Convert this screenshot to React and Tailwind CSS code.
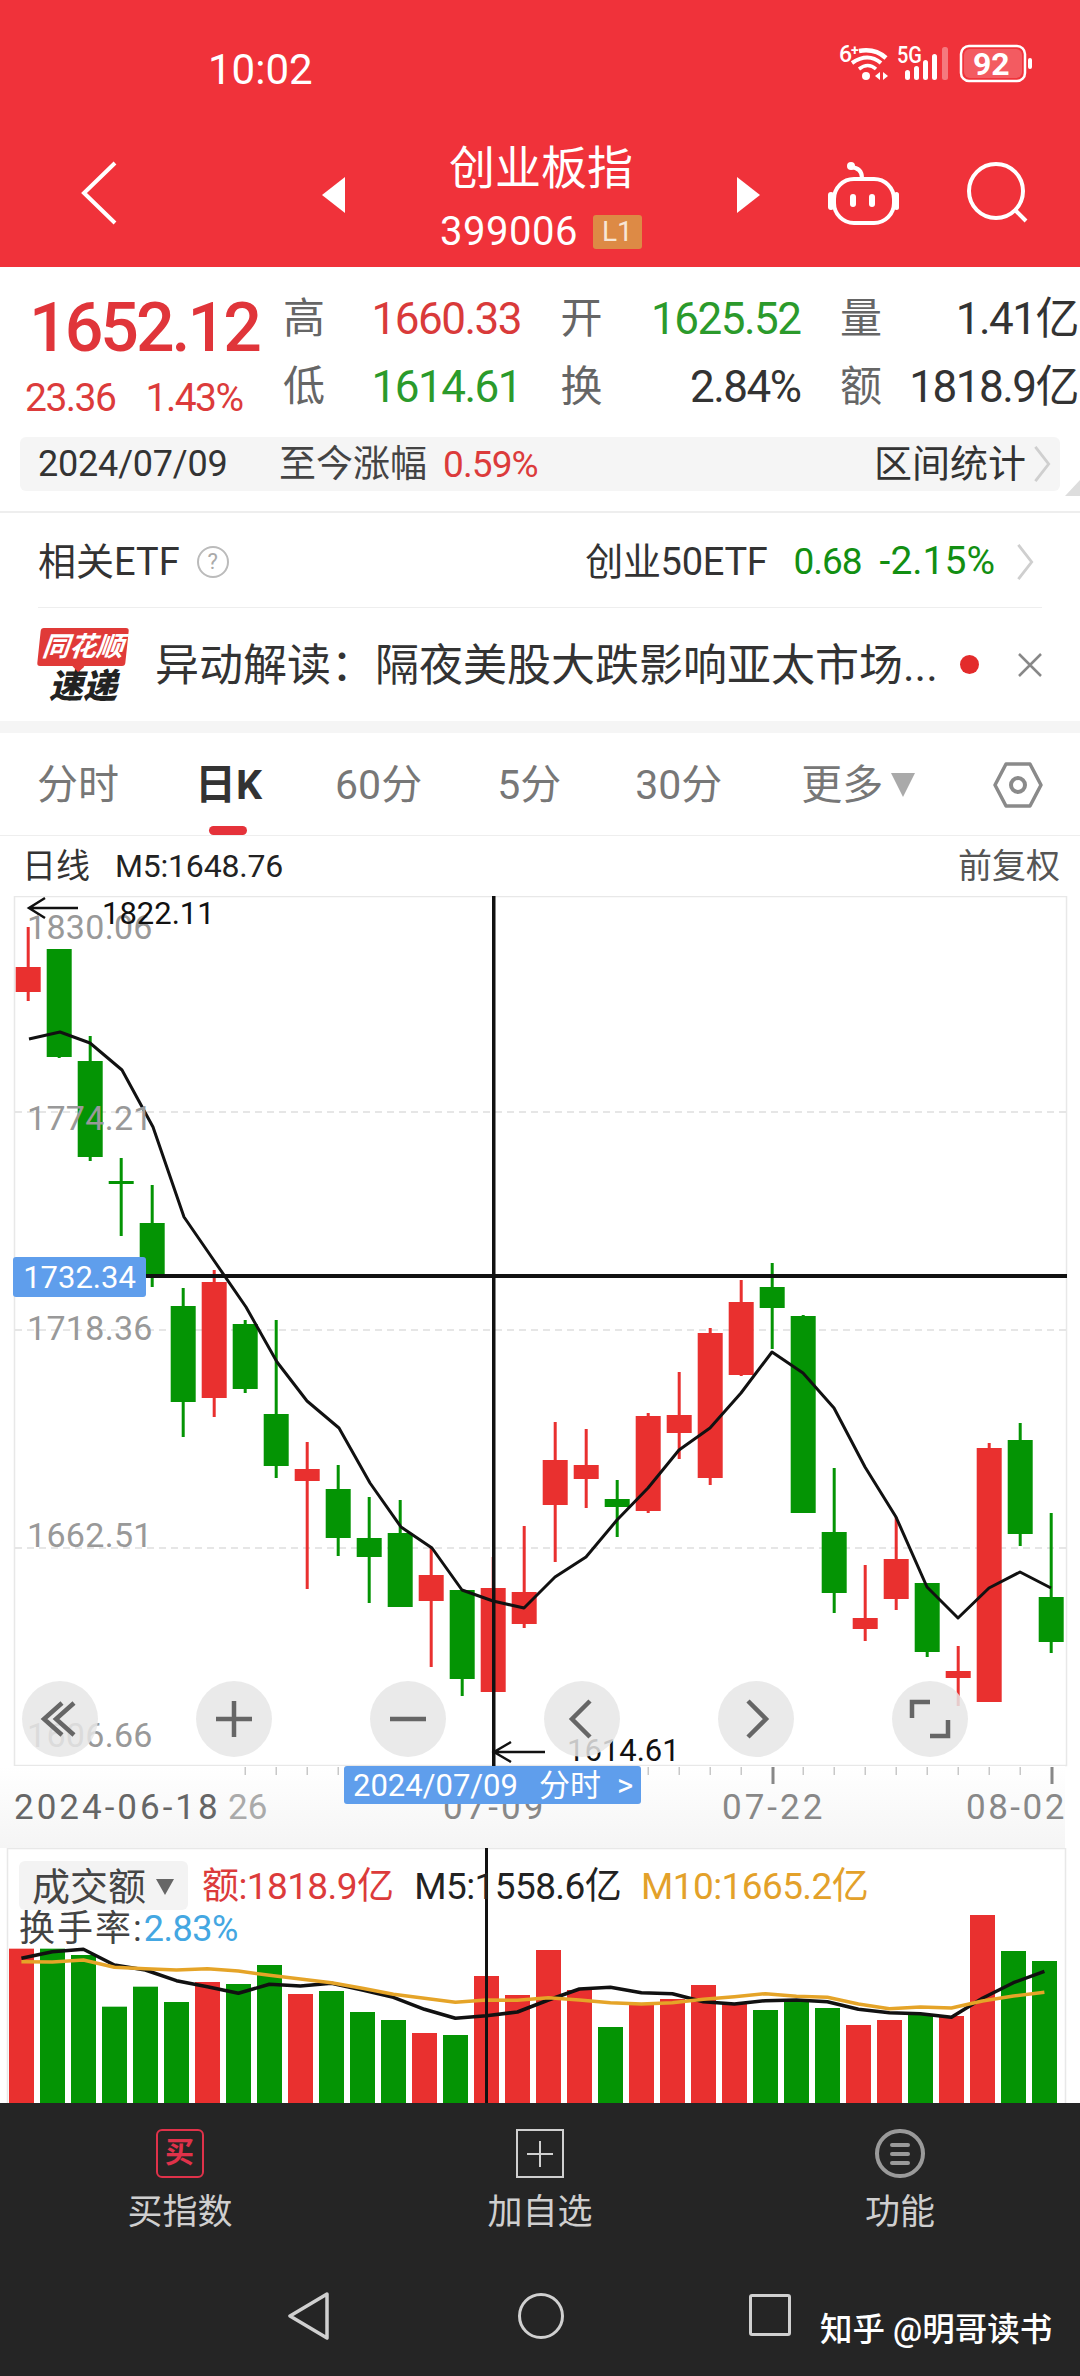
import React from "react";

const R = "#e9302f";
const G = "#049404";
const candles = [
  ["r", 927, 1001, 967, 992], ["g", 949, 1058, 949, 1057], ["g", 1036, 1161, 1061, 1157], ["g", 1158, 1236, 1181, 1184],
  ["g", 1185, 1287, 1223, 1278], ["g", 1288, 1437, 1306, 1402], ["r", 1270, 1417, 1282, 1398], ["g", 1320, 1393, 1324, 1389],
  ["g", 1320, 1478, 1414, 1466], ["r", 1442, 1589, 1469, 1481], ["g", 1465, 1556, 1489, 1538], ["g", 1497, 1603, 1538, 1557],
  ["g", 1500, 1607, 1533, 1607], ["r", 1548, 1667, 1575, 1601], ["g", 1590, 1696, 1590, 1679], ["r", 1557, 1692, 1588, 1692],
  ["r", 1526, 1628, 1592, 1624], ["r", 1422, 1562, 1460, 1505], ["r", 1429, 1508, 1465, 1479], ["g", 1480, 1537, 1499, 1507],
  ["r", 1413, 1513, 1416, 1511], ["r", 1372, 1459, 1415, 1433], ["r", 1328, 1485, 1333, 1478], ["r", 1280, 1376, 1302, 1375],
  ["g", 1263, 1349, 1287, 1308], ["g", 1315, 1513, 1316, 1513], ["g", 1468, 1613, 1532, 1593], ["r", 1565, 1641, 1618, 1629],
  ["r", 1517, 1610, 1559, 1599], ["g", 1583, 1657, 1583, 1652], ["r", 1646, 1706, 1671, 1678], ["r", 1443, 1702, 1448, 1702],
  ["g", 1423, 1546, 1440, 1534], ["g", 1513, 1653, 1597, 1642],
];
const ma5 = "29,1039 60,1032 90,1043 122,1070 153,1127 184,1217 215,1262 246,1307 277,1362 307,1401 339,1428 370,1483 401,1527 432,1548 462,1590 493,1601 524,1608 555,1577 586,1557 617,1520 648,1488 679,1450 710,1428 741,1393 772,1352 803,1373 834,1408 865,1467 896,1517 927,1587 958,1618 989,1588 1020,1572 1051,1588";
const vols = [
  ["r", 356], ["g", 356], ["g", 375], ["g", 530], ["g", 470], ["g", 516], ["r", 456], ["g", 462], ["g", 405], ["r", 492], ["g", 483], ["g", 546],
  ["g", 570], ["r", 609], ["g", 615], ["r", 438], ["r", 495], ["r", 360], ["r", 480], ["g", 591], ["r", 525], ["r", 507], ["r", 465], ["r", 522],
  ["g", 540], ["g", 516], ["g", 534], ["r", 585], ["r", 570], ["g", 555], ["r", 558], ["r", 255], ["g", 363], ["g", 393],
];
const vBlack = [385,365,358,405,420,452,470,490,463,468,460,480,502,538,565,557,546,510,477,472,488,491,515,522,512,510,515,538,548,551,562,505,458,424];
const vOrange = [395,396,390,412,416,420,416,423,436,447,458,475,493,505,517,510,511,503,510,518,522,518,508,500,491,499,502,522,536,531,534,513,498,487];
const toPts = (a) => a.map((v, i) => `${(21.4 + 31 * i).toFixed(1)},${(v / 3).toFixed(1)}`).join(" ");

function StatCell({ label, value, cls }) {
  return (
    <div className="flex h-[68px] items-center justify-between">
      <span className="text-[42px] leading-none text-[#666666]">{label}</span>
      <span className={`text-[44px] leading-none tracking-[-1.5px] ${cls}`}>{value}</span>
    </div>
  );
}

function Chevron({ className }) {
  return (
    <svg className={className} viewBox="0 0 20 40" fill="none" stroke="#cfcfcf" strokeWidth="3">
      <path d="M3 2 L17 20 L3 38" />
    </svg>
  );
}

function RoundBtn({ d }) {
  return (
    <div className="flex h-[76px] w-[76px] items-center justify-center rounded-full bg-[#e6e6e6]/85">
      <svg width="44" height="44" viewBox="0 0 44 44" fill="none" stroke="#666666" strokeWidth="4.5">
        <path d={d} />
      </svg>
    </div>
  );
}

export default function App() {
  return (
    <div className="relative h-[2376px] w-[1080px] overflow-hidden bg-white font-[Roboto,'Noto_Sans_CJK_SC',sans-serif] text-[#333333]">
      {/* header */}
      <header className="relative h-[267px] bg-[#f0323a] text-white">
        <div className="flex h-[140px] items-start justify-between pl-[208px] pr-[47px] pt-[39px]">
          <span className="mt-[6px] text-[42px] leading-[50px]">10:02</span>
          <svg width="195" height="50" viewBox="838 44 195 50" fill="none" stroke="#fff">
            <text x="839" y="67" fontSize="23" fontWeight="500" fill="#fff" stroke="none" fontFamily="Roboto">6</text>
            <text x="851" y="60" fontSize="14" fontWeight="700" fill="#fff" stroke="none" fontFamily="Roboto">+</text>
            <path d="M859 56 Q875 53 886 63" strokeWidth="4.5" />
            <path d="M852 68 Q868 57 881 68" strokeWidth="4" />
            <path d="M859 74 Q868 67 876 74" strokeWidth="3.5" />
            <circle cx="866" cy="81" r="4" fill="#fff" stroke="none" />
            <path d="M880 77 l-5 4 l5 4 Z M883 77 l5 4 l-5 4 Z" fill="#fff" stroke="none" />
            <text x="897" y="68" fontSize="23" fontWeight="500" fill="#fff" stroke="none" fontFamily="Roboto" textLength="25" lengthAdjust="spacingAndGlyphs">5G</text>
            <rect x="905" y="75" width="5" height="10" rx="2.5" fill="#fff" stroke="none" />
            <rect x="914" y="71" width="5" height="14" rx="2.5" fill="#fff" stroke="none" />
            <rect x="923" y="65" width="5" height="20" rx="2.5" fill="#fff" stroke="none" />
            <rect x="932" y="59" width="5" height="26" rx="2.5" fill="#fff" stroke="none" />
            <rect x="942" y="52" width="6" height="33" rx="2.5" fill="#fff" fillOpacity="0.35" stroke="none" />
            <rect x="961" y="51" width="64" height="35" rx="8" strokeWidth="2.5" />
            <rect x="964" y="54" width="58" height="29" rx="6" fill="#fff" fillOpacity="0.2" stroke="none" />
            <text x="973" y="80" fontSize="32" fontWeight="700" fill="#fff" stroke="none" fontFamily="Roboto">92</text>
            <rect x="1028" y="63" width="4" height="11" rx="2" fill="#fff" stroke="none" />
          </svg>
        </div>
        <div className="flex h-[127px] items-start">
          <svg className="ml-[80px] mt-[21px]" width="38" height="64" viewBox="0 0 38 64" fill="none" stroke="#fff" strokeWidth="4">
            <path d="M35 2 L4 32 L35 62" />
          </svg>
          <svg className="ml-[204px] mt-[37px]" width="24" height="36" viewBox="0 0 24 36" fill="#fff">
            <path d="M23 0 L0 18 L23 36 Z" />
          </svg>
          <div className="flex w-[390px] flex-col items-center">
            <span className="h-[75px] pt-[2px] text-[46px] leading-[52px]">创业板指</span>
            <div className="flex items-center gap-[15px]">
              <span className="text-[40px] leading-[34px] tracking-[0.5px]">399006</span>
              <span className="flex h-[34px] w-[49px] items-center justify-center rounded-[3px] bg-[#dd8a45] text-[28px] leading-none text-[#f8e6d5]">L1</span>
            </div>
          </div>
          <svg className="mt-[37px]" width="24" height="36" viewBox="0 0 24 36" fill="#fff">
            <path d="M1 0 L24 18 L1 36 Z" />
          </svg>
          <svg className="ml-[67px] mt-[21px]" width="72" height="66" viewBox="825 161 72 66" fill="none" stroke="#fff" strokeWidth="4">
            <rect x="832" y="179" width="60" height="44" rx="20" />
            <path d="M860 178 Q860 168 849 167" />
            <circle cx="849" cy="166" r="4" fill="#fff" stroke="none" />
            <rect x="826" y="192" width="6" height="18" rx="3" fill="#fff" stroke="none" />
            <rect x="892" y="192" width="5" height="18" rx="2.5" fill="#fff" stroke="none" />
            <rect x="848" y="194" width="6" height="13" rx="3" fill="#fff" stroke="none" />
            <rect x="867" y="194" width="6" height="13" rx="3" fill="#fff" stroke="none" />
          </svg>
          <svg className="ml-[68px] mt-[22px]" width="62" height="62" viewBox="965 164 62 62" fill="none" stroke="#fff" strokeWidth="4">
            <circle cx="994" cy="193" r="27" />
            <path d="M1014 213 L1024 223" />
          </svg>
        </div>
      </header>

      {/* quote stats */}
      <section className="flex h-[170px]">
        <div className="flex w-[283px] flex-col pt-[29px]">
          <span className="pl-[29px] text-[68px] font-medium leading-[64px] tracking-[-3px] text-[#e0353a]">1652.12</span>
          <div className="mt-[23px] flex gap-[30px] pl-[25px] text-[39px] leading-[30px] tracking-[-1.5px] text-[#dc3b3b]">
            <span>23.36</span>
            <span>1.43%</span>
          </div>
        </div>
        <div className="grid h-fit grid-cols-[238px_240px_238px] gap-x-[39.5px] pt-[18px]">
          <StatCell label="高" value="1660.33" cls="text-[#d93a3a]" />
          <StatCell label="开" value="1625.52" cls="text-[#2b9a2b]" />
          <StatCell label="量" value="1.41亿" cls="text-[#333333]" />
          <StatCell label="低" value="1614.61" cls="text-[#2b9a2b]" />
          <StatCell label="换" value="2.84%" cls="text-[#333333]" />
          <StatCell label="额" value="1818.9亿" cls="text-[#333333]" />
        </div>
      </section>

      {/* range bar */}
      <div className="h-[76px] border-b-2 border-[#eeeeee]">
        <div className="relative mx-[20px] flex h-[54px] w-[1040px] items-center rounded-[6px] bg-[#f5f5f5] pl-[18px] pr-[8px] text-[37px] leading-none">
          <span className="w-[241px] text-[36px] tracking-[-0.2px]">2024/07/09</span>
          <span className="text-[#444444]">至今涨幅</span>
          <span className="ml-[16px] text-[37px] tracking-[-0.9px] text-[#dc3b3b]">0.59%</span>
          <span className="ml-auto text-[38px] text-[#333333]">区间统计</span>
          <Chevron className="ml-[6px] h-[38px] w-[20px]" />
        </div>
        <div className="absolute left-[1065px] top-[480px] h-0 w-0 border-b-[16px] border-l-[15px] border-b-[#dddddd] border-l-transparent" />
      </div>

      {/* ETF */}
      <section className="mx-[38px] flex h-[95px] items-center border-b border-[#eeeeee] pt-[3px]">
        <span className="text-[38px] leading-none">相关ETF</span>
        <span className="ml-[17px] flex h-[32px] w-[32px] items-center justify-center rounded-full border-2 border-[#bbbbbb] text-[22px] leading-none text-[#aaaaaa]">?</span>
        <span className="ml-auto text-[38px] leading-none tracking-[-0.3px]">创业50ETF</span>
        <span className="ml-[26px] text-[37px] leading-none tracking-[-1px] text-[#128f12]">0.68</span>
        <span className="ml-[18px] text-[39px] leading-none text-[#128f12]">-2.15%</span>
        <Chevron className="ml-[20px] mr-[7px] h-[38px] w-[20px]" />
      </section>

      {/* news */}
      <section className="flex h-[113px] items-center pl-[39px]">
        <div className="flex h-[74px] w-[88px] flex-col items-center">
          <div className="relative flex h-[38px] w-[88px] -skew-x-6 items-center justify-center rounded-[3px] bg-[#e03a38] text-[27px] font-bold italic leading-none text-white">
            同花顺
            <div className="absolute left-[36px] top-[34px] h-[8px] w-[10px] rotate-45 bg-[#e03a38]" />
          </div>
          <div className="mt-[4px] text-[34px] font-black italic leading-[32px] text-[#222222]">速递</div>
        </div>
        <span className="ml-[28px] w-[785px] whitespace-nowrap pt-[3px] text-[44px] leading-none text-[#333333]">异动解读：隔夜美股大跌影响亚太市场...</span>
        <span className="ml-[20px] h-[19px] w-[19px] rounded-full bg-[#e32b2b]" />
        <svg className="ml-[39px]" width="24" height="24" viewBox="0 0 24 24" stroke="#888888" strokeWidth="2.5">
          <path d="M1 1 L23 23 M23 1 L1 23" />
        </svg>
      </section>
      <div className="h-[12px] bg-[#f5f5f5]" />

      {/* tabs */}
      <nav className="relative flex h-[103px] items-center border-b border-[#eeeeee] pt-[2px] text-[41px] leading-none text-[#777777]">
        <span className="ml-[37px]">分时</span>
        <span className="ml-[76px] font-bold text-[#333333]">日K</span>
        <span className="ml-[73px]">60分</span>
        <span className="ml-[75px]">5分</span>
        <span className="ml-[74px]">30分</span>
        <span className="ml-[79px]">更多</span>
        <svg className="ml-[8px]" width="24" height="24" viewBox="0 0 24 24" fill="#aaaaaa"><path d="M0 0 H24 L12 24 Z" /></svg>
        <svg className="ml-[78px]" width="50" height="46" viewBox="0 0 50 46" fill="none" stroke="#8a8a8a">
          <path d="M13 2 H37 L48 23 L37 44 H13 L2 23 Z" strokeWidth="3.5" strokeLinejoin="round" />
          <circle cx="25" cy="23" r="7" strokeWidth="4" />
        </svg>
        <div className="absolute left-[209px] top-[93px] h-[9px] w-[38px] rounded-full bg-[#e5323a]" />
      </nav>

      {/* sub row */}
      <div className="flex h-[60px] items-center pl-[22px] pr-[20px] text-[34px] leading-none">
        <span>日线</span>
        <span className="ml-[25px] text-[32px] tracking-[-0.2px] text-[#222222]">M5:1648.76</span>
        <span className="ml-auto text-[#555555]">前复权</span>
      </div>

      {/* chart */}
      <section className="relative h-[952px]">
        <svg className="absolute left-0 top-0" width="1080" height="952" viewBox="0 896 1080 952">
          <defs>
            <linearGradient id="band" x1="0" x2="0" y1="0" y2="1">
              <stop offset="0" stopColor="#ffffff" />
              <stop offset="1" stopColor="#f5f5f5" />
            </linearGradient>
          </defs>
          <rect x="14.5" y="896.5" width="1052" height="869" fill="#fff" stroke="#e8e8e8" strokeWidth="1.5" />
          <rect x="0" y="1766" width="1065" height="82" fill="url(#band)" />
          {[1112, 1330, 1548].map((y) => (
            <line key={y} x1="15" x2="1066" y1={y} y2={y} stroke="#dedede" strokeWidth="1.5" strokeDasharray="7 5" />
          ))}
          {candles.map((c, i) => {
            const x = 28.2 + 31 * i;
            const col = c[0] === "r" ? R : G;
            return (
              <g key={i} fill={col}>
                <rect x={x - 1.5} y={c[1]} width="3" height={c[2] - c[1]} />
                <rect x={x - 12.5} y={c[3]} width="25" height={c[4] - c[3]} />
              </g>
            );
          })}
          {candles.map((c, i) => {
            const x = 245.5 + 31 * i;
            if (x > 1060 || (x >= 345 && x <= 641)) return null;
            const major = x === 772.5 || x === 1051.5;
            return <rect key={i} x={x - 1} y="1767" width={major ? 3 : 1.5} height={major ? 17 : 8} fill={major ? "#888888" : "#c8c8c8"} />;
          })}
          <polyline points={ma5} fill="none" stroke="#111111" strokeWidth="3" strokeLinejoin="round" />
          <rect x="492" y="895" width="3.5" height="871" fill="#111111" />
          <rect x="146" y="1274" width="921" height="4" fill="#111111" />
          <path d="M78 908 H29 M45 898 L29 908 L45 918" fill="none" stroke="#111111" strokeWidth="2.5" />
          <path d="M545 1752 H494 M511 1742 L494 1752 L511 1762" fill="none" stroke="#111111" strokeWidth="2.5" />
        </svg>

        {[
          ["1830.06", "top-[11px]"],
          ["1774.21", "top-[202px]"],
          ["1718.36", "top-[412px]"],
          ["1662.51", "top-[619px]"],
          ["1606.66", "top-[819px]"],
        ].map(([t, top]) => (
          <span key={t} className={`absolute left-[27px] ${top} text-[34px] leading-[40px] tracking-[0.3px] text-[#999999]`}>{t}</span>
        ))}
        <span className="absolute left-[102px] top-[1px] text-[31px] leading-[34px] text-[#111111]">1822.11</span>
        <span className="absolute left-[567px] top-[838px] text-[31px] leading-[34px] text-[#111111]">1614.61</span>
        <div className="absolute left-[13px] top-[361px] flex h-[40px] w-[133px] items-center justify-center rounded-[3px] bg-[#5f9eec] text-[31px] leading-none text-white">1732.34</div>

        <div className="absolute left-[22px] top-[785px] flex w-[946px] justify-between">
          <RoundBtn d="M24 6 L6 22 L24 38 M36 6 L18 22 L36 38" />
          <RoundBtn d="M22 4 V40 M4 22 H40" />
          <RoundBtn d="M4 22 H40" />
          <RoundBtn d="M30 4 L12 22 L30 40" />
          <RoundBtn d="M14 4 L32 22 L14 40" />
          <RoundBtn d="M4 21 V5 H22 M40 23 V39 H22" />
        </div>

        <span className="absolute left-[14px] top-[892px] text-[35px] leading-[40px] tracking-[3px] text-[#666666]">2024-06-18</span>
        <span className="absolute left-[228px] top-[892px] text-[35px] leading-[40px] text-[#aaaaaa]">26</span>
        <span className="absolute left-[443px] top-[892px] text-[35px] leading-[40px] tracking-[3px] text-[#888888]">07-09</span>
        <span className="absolute left-[722px] top-[892px] text-[35px] leading-[40px] tracking-[3px] text-[#888888]">07-22</span>
        <span className="absolute left-[966px] top-[892px] text-[35px] leading-[40px] tracking-[2.5px] text-[#888888]">08-02</span>

        <div className="absolute left-[344px] top-[870px] flex h-[38px] w-[297px] items-center rounded-[3px] bg-[#5f9eec] pl-[9px] text-[31px] leading-none text-white">
          <span>2024/07/09</span>
          <span className="ml-[21px]">分时</span>
          <span className="ml-[16px]">&gt;</span>
        </div>
      </section>

      {/* volume */}
      <section className="relative h-[255px]">
        <svg className="absolute left-0 top-0" width="1080" height="255" viewBox="0 0 1080 255">
          <path d="M7.5 255 V0.5 H1065.5 V255" fill="none" stroke="#e8e8e8" strokeWidth="1.5" />
          {vols.map(([c, top], i) => (
            <rect key={i} x={9 + 31 * i} y={(top / 3) - 18} width="25" height={255 - (top / 3) + 18} fill={c === "r" ? R : G} />
          ))}
          <g transform="translate(0 -18)">
            <polyline points={toPts(vBlack)} fill="none" stroke="#111111" strokeWidth="3.5" strokeLinejoin="round" />
            <polyline points={toPts(vOrange)} fill="none" stroke="#e5a428" strokeWidth="3.5" strokeLinejoin="round" />
          </g>
          <rect x="485" y="0" width="3" height="255" fill="#111111" />
        </svg>
        <div className="absolute left-[19px] top-[13px] flex h-[49px] w-[169px] items-center rounded-[6px] bg-[#f3f3f3] pl-[13px] pt-[2px] text-[38px] leading-none text-[#444444]">
          <span>成交额</span>
          <svg className="ml-[10px]" width="18" height="18" viewBox="0 0 18 18" fill="#666666"><path d="M0 1 H18 L9 17 Z" /></svg>
        </div>
        <div className="absolute left-[202px] top-[19px] flex text-[37px] leading-[40px] tracking-[-0.6px]">
          <span className="text-[#dc3b3b]">额:1818.9亿</span>
          <span className="ml-[21px] text-[#222222]">M5:1558.6亿</span>
          <span className="ml-[20px] text-[#e3a12a]">M10:1665.2亿</span>
        </div>
        <div className="absolute left-[19px] top-[61px] flex text-[36px] leading-[40px]">
          <span className="tracking-[2px] text-[#444444]">换手率:</span>
          <span className="text-[#44a7e2] tracking-[-0.5px]">2.83%</span>
        </div>
      </section>

      {/* bottom bar */}
      <footer className="relative h-[273px] bg-[#252525]">
        <div className="grid grid-cols-3 pt-[26px]">
          <div className="flex flex-col items-center text-[#cfcfcf]" >
            <div className="ml-[-1px] flex h-[49px] w-[48px] items-center justify-center rounded-[6px] border-[2.5px] border-[#e0324a] text-[29px] font-bold leading-none text-[#e0324a]">买</div>
            <span className="mt-[15px] text-[35px] leading-[40px]">买指数</span>
          </div>
          <div className="flex flex-col items-center text-[#cfcfcf]">
            <div className="flex h-[49px] w-[48px] items-center justify-center border-[2.5px] border-[#d0d0d0]">
              <svg width="26" height="26" viewBox="0 0 26 26" stroke="#d0d0d0" strokeWidth="2"><path d="M13 0 V26 M0 13 H26" /></svg>
            </div>
            <span className="mt-[15px] text-[35px] leading-[40px]">加自选</span>
          </div>
          <div className="flex flex-col items-center text-[#cfcfcf]">
            <div className="flex h-[49px] w-[50px] flex-col items-center justify-center gap-[5px] rounded-full border-[4px] border-[#9a9a9a]">
              <div className="h-[4px] w-[20px] rounded-full bg-[#9a9a9a]" />
              <div className="h-[4px] w-[20px] rounded-full bg-[#9a9a9a]" />
              <div className="h-[4px] w-[20px] rounded-full bg-[#9a9a9a]" />
            </div>
            <span className="mt-[15px] text-[35px] leading-[40px]">功能</span>
          </div>
        </div>
        <div className="mt-[58px] flex h-[50px] items-center pl-[288px]">
          <svg width="42" height="48" viewBox="0 0 42 48" fill="none" stroke="#d0d0d0" strokeWidth="3.5" strokeLinejoin="round">
            <path d="M39 2 L2 24 L39 46 Z" />
          </svg>
          <div className="ml-[188px] h-[46px] w-[46px] rounded-full border-[3.5px] border-[#d0d0d0]" />
          <div className="ml-[185px] mb-[2px] h-[42px] w-[42px] rounded-[3px] border-[3.5px] border-[#d0d0d0]" />
        </div>
        <span className="absolute left-[820px] top-[207px] whitespace-nowrap text-[32.5px] font-medium leading-[40px] text-white">知乎 @明哥读书</span>
      </footer>
    </div>
  );
}
